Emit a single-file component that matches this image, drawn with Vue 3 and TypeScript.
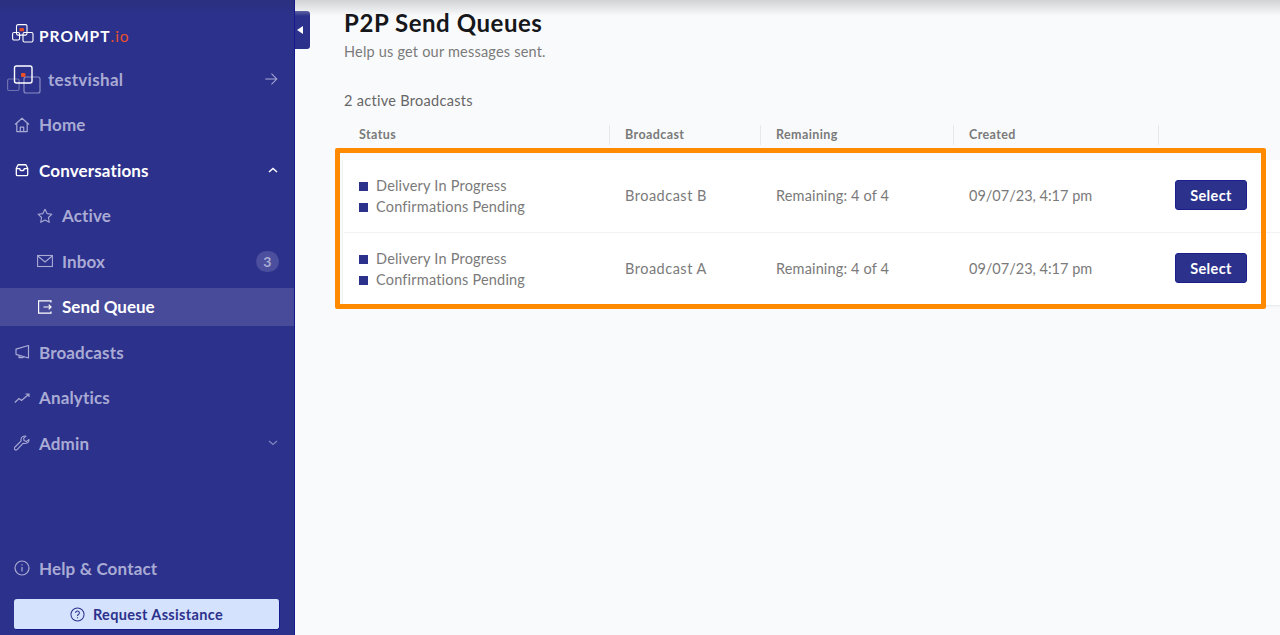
<template>
  <div class="app">
    <aside class="sidebar">
      <div class="logo">
        <svg class="logo__mark" viewBox="0 0 24 20" fill="none" stroke="#fff" stroke-width="1.1">
          <rect x="0.600" y="8.500" width="7" height="7.500" rx="1.500" />
          <rect x="11" y="8.500" width="10" height="9.500" rx="1.500" />
          <rect x="4.500" y="0.600" width="10.500" height="10.500" rx="1.500" />
          <rect x="7.500" y="4" width="4.500" height="3.200" rx="0.500" fill="#e8502a" stroke="none" />
        </svg>
        <span class="logo__text">PROMPT<em>.io</em></span>
      </div>

      <div class="account">
        <svg class="account__mark" viewBox="0 0 36 30" fill="none">
          <rect x="0.600" y="15" width="11.500" height="11.500" rx="1.500" stroke="#6e72b0" stroke-width="1.200" />
          <rect x="17" y="13" width="16" height="16" rx="2" stroke="#8a8dc2" stroke-width="1.200" />
          <rect x="7.500" y="2" width="17.500" height="17" rx="2" stroke="#fff" stroke-width="1.400" />
          <rect x="14" y="9" width="4.500" height="4" rx="1" fill="#e8502a" />
        </svg>
        <span class="account__name">testvishal</span>
        <svg class="account__arrow" viewBox="0 0 16 16" fill="none" stroke="currentColor" stroke-width="1.200">
          <path d="M1.500 8h13M8.500 1.800 14.600 8l-6.100 6.200" />
        </svg>
      </div>

      <nav class="nav">
        <div class="nav__row">
          <svg class="nav__icon" viewBox="0 0 16 16" fill="none" stroke="currentColor" stroke-width="1.200" stroke-linejoin="round">
            <path d="M1 7.500 8 1.200l7 6.300M2.800 6.200V14.600h10.400V6.200M6.300 14.600v-4.400h3.400v4.400" />
          </svg>
          <span>Home</span>
        </div>
        <div class="nav__row nav__row--open">
          <svg class="nav__icon nav__icon--sm" viewBox="0 0 16 16" fill="none" stroke="currentColor" stroke-width="1.500" stroke-linejoin="round">
            <path d="M3.500 2h9L14.500 6v7a1.500 1.500 0 0 1-1.500 1.500H3A1.500 1.500 0 0 1 1.500 13V6zM1.500 6.500h4c0 3 5 3 5 0h4" />
          </svg>
          <span>Conversations</span>
          <svg class="nav__chev" viewBox="0 0 10 6" fill="none" stroke="currentColor" stroke-width="1.500">
            <path d="M1 5l4-3.500L9 5" />
          </svg>
        </div>
        <div class="nav__row nav__row--sub">
          <svg class="nav__icon" viewBox="0 0 16 16" fill="none" stroke="currentColor" stroke-width="1.100" stroke-linejoin="round">
            <path d="M8 1.200l2.100 4.400 4.800.6-3.500 3.300.9 4.800L8 12l-4.300 2.300.9-4.800L1.100 6.200l4.800-.6z" />
          </svg>
          <span>Active</span>
        </div>
        <div class="nav__row nav__row--sub">
          <svg class="nav__icon" viewBox="0 0 16 16" fill="none" stroke="currentColor" stroke-width="1.100">
            <rect x="0.600" y="2.500" width="14.800" height="11" />
            <path d="M0.800 3l7.200 6 7.200-6" />
          </svg>
          <span>Inbox</span>
          <span class="nav__badge">3</span>
        </div>
        <div class="nav__row nav__row--sub nav__row--current">
          <svg class="nav__icon" viewBox="0 0 16 16" fill="none" stroke="currentColor" stroke-width="1.200">
            <path d="M14 3.500V1.800H1.600v12.400H14v-1.700M6.500 8h7.500M11.700 5.700 14 8l-2.300 2.300" />
          </svg>
          <span class="nav__current-label">Send Queue</span>
        </div>
        <div class="nav__row">
          <svg class="nav__icon" viewBox="0 0 16 16" fill="none" stroke="currentColor" stroke-width="1.200" stroke-linejoin="round">
            <path d="M14.500 1.500v12.500L2 10.300V5.200zM5 11.200v2.400h3.800v-1.200" />
          </svg>
          <span>Broadcasts</span>
        </div>
        <div class="nav__row">
          <svg class="nav__icon" viewBox="0 0 16 16" fill="none" stroke="currentColor" stroke-width="1.200">
            <path d="M0.800 12.500 5 8.500l2.500 2L14.500 4.500M11.500 4h3.500v3" />
          </svg>
          <span>Analytics</span>
        </div>
        <div class="nav__row">
          <svg class="nav__icon" viewBox="0 0 16 16" fill="none" stroke="currentColor" stroke-width="1.100" stroke-linejoin="round">
            <path d="M15 4.500 12.200 6.600 10 5.600l-.3-2.500L12 1.200C9.500.4 7 2 7 4.500c0 .6.100 1 .2 1.400L1 12c-.9 1-.9 1.800-.2 2.500s1.600.7 2.500-.2l6-6.100c2.800 1 6-.8 5.700-3.700z" />
          </svg>
          <span>Admin</span>
          <svg class="nav__chev nav__chev--dim" viewBox="0 0 10 6" fill="none" stroke="currentColor" stroke-width="1.200">
            <path d="M1 1l4 3.500L9 1" />
          </svg>
        </div>
      </nav>

      <div class="sidebar__foot">
        <div class="nav__row nav__row--help">
          <svg class="nav__icon" viewBox="0 0 16 16" fill="none" stroke="currentColor" stroke-width="1.200">
            <circle cx="8" cy="8" r="7" />
            <path d="M8 7v4.500M8 4.200v1.300" />
          </svg>
          <span>Help &amp; Contact</span>
        </div>
        <button class="assist">
          <svg viewBox="0 0 16 16" fill="none" stroke="currentColor" stroke-width="1.100">
            <circle cx="8" cy="8" r="7" />
            <path d="M6 6.300a2 2 0 1 1 3 1.700c-.7.400-1 .8-1 1.600M8 11v1" />
          </svg>
          Request Assistance
        </button>
      </div>

      <div class="collapse"><i></i></div>
    </aside>

    <main class="main">
      <h1>P2P Send Queues</h1>
      <p class="main__sub">Help us get our messages sent.</p>
      <p class="main__count">{{ rows.length }} active Broadcasts</p>

      <div class="table">
        <div class="table__head">
          <div>Status</div>
          <div>Broadcast</div>
          <div>Remaining</div>
          <div>Created</div>
          <div></div>
        </div>
        <div class="table__body">
          <div v-for="row in rows" :key="row.name" class="table__row">
            <div class="status">
              <div v-for="s in row.status" :key="s"><i></i>{{ s }}</div>
            </div>
            <div class="cell-name">{{ row.name }}</div>
            <div class="cell-remaining">{{ row.remaining }}</div>
            <div class="cell-created">{{ row.created }}</div>
            <div class="table__action"><button class="select">Select</button></div>
          </div>
        </div>
        <div class="highlight"></div>
      </div>
    </main>
  </div>
</template>

<script setup lang="ts">
interface QueueRow {
  name: string;
  status: string[];
  remaining: string;
  created: string;
}

const rows: QueueRow[] = [
  { name: 'Broadcast B', status: ['Delivery In Progress', 'Confirmations Pending'], remaining: 'Remaining: 4 of 4', created: '09/07/23, 4:17 pm' },
  { name: 'Broadcast A', status: ['Delivery In Progress', 'Confirmations Pending'], remaining: 'Remaining: 4 of 4', created: '09/07/23, 4:17 pm' }
];
</script>

<style>
html, body {
  margin: 0;
  overflow: hidden;
}
</style>

<style scoped>
.app {
  display: flex;
  width: 1280px;
  height: 635px;
  overflow: hidden;
  font-family: Lato, "Liberation Sans", sans-serif;
  background: #f9fafc;
}

.sidebar {
  position: relative;
  flex: 0 0 295px;
  box-sizing: border-box;
  height: 635px;
  display: flex;
  flex-direction: column;
  background: linear-gradient(#2b3080 0, #2c318c 16px);
  border-right: 1px solid #14198c;
  color: #a9abd4;
}

.logo {
  display: flex;
  align-items: flex-start;
  height: 23px;
  margin: 24px 0 0 12px;
}

.logo__mark {
  width: 24px;
  height: 20px;
  margin-right: 3px;
}

.logo__text {
  margin-top: 3px;
  font-size: 15.500px;
  font-weight: 700;
  letter-spacing: 1px;
  color: #fff;
}

.logo__text em {
  font-style: normal;
  font-weight: 400;
  color: #e8502a;
}

.account {
  display: flex;
  align-items: center;
  height: 32px;
  margin-top: 16px;
  padding: 0 16px 0 7px;
  font-size: 17px;
  font-weight: 700;
  letter-spacing: 0.300px;
}

.account__mark {
  width: 36px;
  height: 30px;
  margin-right: 5px;
}

.account__name {
  flex: 1;
}

.account__arrow {
  width: 14px;
  height: 14px;
}

.nav {
  display: flex;
  flex-direction: column;
  margin-top: 11px;
}

.nav__row {
  display: flex;
  align-items: center;
  height: 37.500px;
  margin-bottom: 8px;
  padding: 0 16px 0 14px;
  font-size: 17px;
  font-weight: 700;
  letter-spacing: 0.150px;
}

.nav__icon {
  flex: none;
  width: 16px;
  height: 16px;
  margin-right: 9px;
}

.nav__icon--sm {
  width: 14px;
  height: 14px;
  margin: 0 10px 0 1px;
}

.nav__row--open {
  color: #fff;
}

.nav__row--sub {
  padding-left: 37px;
}

.nav__row--current {
  color: #fff;
  background: rgba(255, 255, 255, 0.13);
}

.nav__current-label {
  letter-spacing: 0;
}

.nav__chev {
  width: 10px;
  height: 6px;
  margin-left: auto;
}

.nav__chev--dim {
  opacity: 0.7;
}

.nav__badge {
  width: 23px;
  height: 21px;
  margin: 0 -1px 0 auto;
  border-radius: 11px;
  background: rgba(255, 255, 255, 0.15);
  text-align: center;
  font-size: 14px;
  line-height: 21px;
}

.sidebar__foot {
  margin-top: auto;
  padding: 0 14px 5px;
}

.nav__row--help {
  padding: 0;
  margin-bottom: 12px;
}

.assist {
  display: flex;
  align-items: center;
  justify-content: center;
  gap: 8px;
  width: 266px;
  height: 31px;
  padding: 0;
  border: 1px solid #14198c;
  border-width: 0 1px 1px 0;
  border-radius: 3px;
  background: #d5e2fd;
  color: #2c318c;
  font: 700 14.500px Lato, "Liberation Sans", sans-serif;
  letter-spacing: 0.350px;
}

.assist svg {
  width: 15px;
  height: 15px;
}

.collapse {
  position: absolute;
  top: 11px;
  right: -16px;
  display: flex;
  align-items: center;
  width: 15px;
  height: 38px;
  padding-left: 2px;
  box-sizing: border-box;
  border-radius: 0 3px 3px 0;
  background: #2c318c;
}

.collapse i {
  border: 4.500px solid transparent;
  border-left-width: 0;
  border-right: 6px solid #fff;
}

.main {
  position: relative;
  flex: 1;
  min-width: 0;
  padding: 10px 0 0 49px;
  color: #7a7a7a;
}

.main::before {
  content: "";
  position: absolute;
  inset: 0 0 auto 0;
  height: 16px;
  background: linear-gradient(#d2d3d5, rgba(249, 250, 252, 0));
}

h1 {
  position: relative;
  margin: 0;
  font-size: 24px;
  line-height: 26px;
  font-weight: 700;
  letter-spacing: 0.550px;
  color: #16171a;
}

.main__sub {
  margin: 6px 0 0;
  font-size: 14.500px;
  line-height: 20px;
  letter-spacing: 0.200px;
}

.main__count {
  margin: 29px 0 0;
  font-size: 14.500px;
  line-height: 20px;
  letter-spacing: 0.300px;
  color: #666;
}

.table {
  position: relative;
  margin-top: 14px;
}

.table__head,
.table__row {
  display: grid;
  grid-template-columns: 266px 151px 193px 205px 1fr;
}

.table__head {
  height: 20px;
  font-size: 12.500px;
  font-weight: 700;
  line-height: 20px;
  letter-spacing: 0.400px;
}

.table__head > div {
  padding-left: 15px;
  border-right: 1px solid #e7e8ec;
}

.table__head > div:last-child {
  border-right: 0;
}

.table__body {
  margin-top: 15px;
  margin-left: -1px;
  padding-left: 1px;
  background: #fff;
  box-shadow: 0 1px 2px rgba(0, 0, 0, 0.08);
}

.table__row {
  align-items: center;
  height: 70px;
  padding-bottom: 2px;
  font-size: 14.500px;
  letter-spacing: 0.150px;
  border-bottom: 1px solid #f1f2f4;
}

.table__row:last-child {
  border-bottom: 0;
}

.table__row > div {
  padding-left: 15px;
}

.table__row > .status {
  padding-top: 2px;
  line-height: 21px;
  letter-spacing: 0.200px;
}

.table__row > .cell-name {
  letter-spacing: 0.500px;
}

.table__row > .cell-created {
  letter-spacing: 0;
}

.status i {
  display: inline-block;
  width: 9px;
  height: 9px;
  margin-right: 8px;
  background: #2c318c;
}

.table__row > .table__action {
  padding-left: 16px;
}

.select {
  width: 72px;
  height: 30px;
  padding: 0;
  border: 1px solid #1a1f8c;
  border-radius: 3px;
  background: #2c318c;
  color: #fff;
  font: 700 14.500px Lato, "Liberation Sans", sans-serif;
  letter-spacing: 0.350px;
}

.highlight {
  position: absolute;
  left: -9px;
  top: 23px;
  width: 931px;
  height: 161px;
  box-sizing: border-box;
  border: 5px solid #ff8a00;
  border-radius: 2px;
}
</style>
